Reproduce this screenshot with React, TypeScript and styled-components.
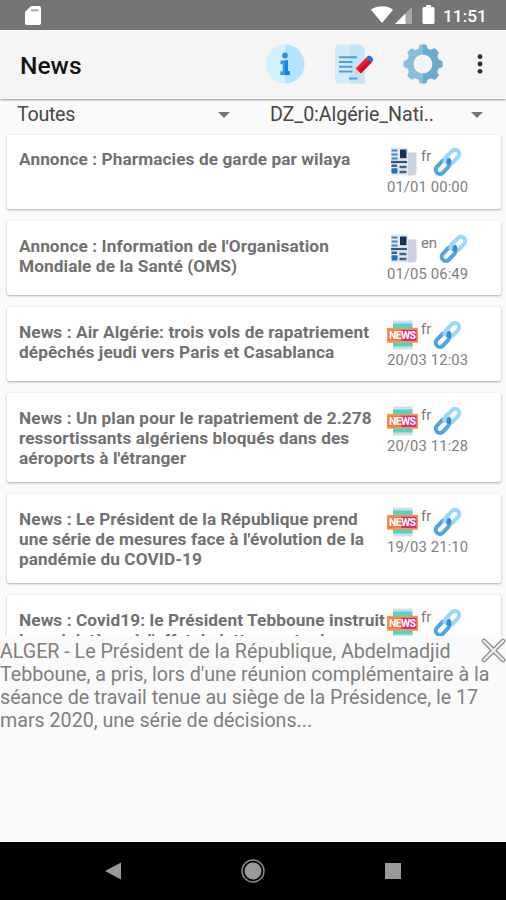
import React from 'react';
import styled, { createGlobalStyle } from 'styled-components';

const GlobalStyle = createGlobalStyle`
  * { box-sizing: border-box; }
  body { margin: 0; background: #fafafa; font-family: Roboto, sans-serif; }
  svg { display: block; flex: none; }
`;

const Screen = styled.div`
  width: 506px;
  height: 900px;
  display: flex;
  flex-direction: column;
  overflow: hidden;
  background: #fafafa;
`;

const StatusBar = styled.header`
  flex: none;
  height: 30px;
  padding: 0 20px 0 25px;
  display: flex;
  align-items: center;
  background: #757575;
  color: #fff;
`;

const StatusIcons = styled.div`
  margin-left: auto;
  display: flex;
  align-items: center;
`;

const Clock = styled.span`
  margin-left: 8px;
  width: 43px;
  font-size: 17.3px;
  font-weight: 500;
  line-height: 30px;
  padding-top: 2px;
  white-space: nowrap;
`;

const Toolbar = styled.nav`
  flex: none;
  position: relative;
  height: 69px;
  padding: 0 17px 0 20px;
  display: flex;
  align-items: center;
  background: #f5f5f5;
  border-top: 1px solid #fdfdfd;
  box-shadow: 0 1px 2px rgba(0, 0, 0, 0.42);
`;

const Title = styled.h1`
  margin: 1px auto 0 0;
  font-size: 24.6px;
  font-weight: 500;
  line-height: 30px;
  letter-spacing: 0;
  color: #141414;
`;

const Actions = styled.div`
  display: flex;
  align-items: center;
  margin-top: -2px;
`;

const Action = styled.button<{ $gap: number }>`
  display: flex;
  padding: 0;
  margin: 0 0 0 ${p => p.$gap}px;
  border: 0;
  background: none;
`;

const Filters = styled.div`
  flex: none;
  height: 33px;
  display: grid;
  grid-template-columns: 253px 253px;
`;

const Filter = styled.div<{ $track: number }>`
  display: flex;
  align-items: center;
  justify-content: space-between;
  height: 32px;
  padding: 0 23px 1px 17px;
  font-size: 19.7px;
  letter-spacing: ${p => p.$track}px;
  color: #484848;
  white-space: nowrap;
`;

const List = styled.main`
  flex: none;
  height: 504px;
  padding: 2.7px 5px 0 7px;
  display: flex;
  flex-direction: column;
  gap: 12px;
  overflow: hidden;
`;

const Card = styled.article<{ $tall: boolean }>`
  flex: none;
  height: ${p => (p.$tall ? 89 : 74.2)}px;
  padding: 14.8px 0 0 12px;
  display: flex;
  background: #fff;
  border-radius: 2.5px;
  box-shadow: 0 1px 2.5px rgba(0, 0, 0, 0.3), 0 0 1px rgba(0, 0, 0, 0.1);
`;

const Headline = styled.h2`
  flex: none;
  width: 368px;
  margin: 0;
  font-size: 17.23px;
  line-height: 20.2px;
  font-weight: 700;
  color: #717171;
`;

const Line = styled.span<{ $track: number }>`
  display: block;
  white-space: nowrap;
  letter-spacing: ${p => p.$track}px;
`;

const Meta = styled.aside`
  display: flex;
  flex-direction: column;
  margin-top: -2px;
`;

const MetaIcons = styled.div`
  height: 32px;
  display: flex;
  align-items: flex-start;
`;

const Lang = styled.span`
  margin: 0 1px 0 3px;
  font-size: 14.8px;
  line-height: 18px;
  color: #7c7c7c;
`;

const Stamp = styled.time`
  font-size: 14.8px;
  line-height: 17px;
  letter-spacing: 0.12px;
  color: #808080;
  white-space: nowrap;
`;

const Detail = styled.section`
  flex: 1;
  position: relative;
  background: #fafafa;
  padding-top: 3.6px;
`;

const DetailText = styled.p`
  margin: 0;
  font-size: 19.7px;
  line-height: 23.1px;
  color: #7f7f7f;
`;

const Close = styled.button`
  position: absolute;
  top: 2px;
  right: 0;
  padding: 0;
  border: 0;
  background: none;
`;

const NavBar = styled.footer`
  flex: none;
  height: 58px;
  padding: 0 104px;
  display: flex;
  align-items: center;
  justify-content: space-between;
  background: #000;
`;

const Caret = () => (
  <svg width="12" height="6" viewBox="0 0 12 6"><path d="M0 0h12L6 6z" fill="#757575" /></svg>
);

const SdCard = () => (
  <svg width="16" height="19" viewBox="0 0 16 19">
    <path d="M6 0h8a2 2 0 0 1 2 2v15a2 2 0 0 1-2 2H2a2 2 0 0 1-2-2V6z" fill="#fff" />
    <path d="M6 4.2h7.500" stroke="#b0b0b0" strokeWidth="2.200" />
  </svg>
);

const Signals = () => (
  <svg width="64" height="20" viewBox="0 0 64 20">
    <path d="M0 4.800C6 .200 16 .200 22 4.800L11 18z" fill="#fff" />
    <path d="M41 2v17H24z" fill="#a6a6a6" />
    <path d="M34.500 8.500V19H24z" fill="#fff" />
    <path d="M55 0h5v2h2a1.500 1.500 0 0 1 1.500 1.500v14A1.500 1.500 0 0 1 62 19h-9a1.500 1.500 0 0 1-1.500-1.500v-14A1.500 1.500 0 0 1 53 2h2z" fill="#fff" />
  </svg>
);

const InfoIcon = () => (
  <svg width="40" height="40" viewBox="0 0 40 40">
    <circle cx="20" cy="20" r="19.500" fill="#d5f0ff" />
    <path d="M20 .5a19.500 19.500 0 0 1 0 39z" fill="#b5e2ff" />
    <circle cx="20" cy="11.500" r="2.900" fill="#2d93ee" />
    <path d="M15.500 16.500H23v10.700h1.800V31h-9.500v-3.800h2.400v-7h-2.200z" fill="#3299f2" />
    <path d="M20 16.500h3v10.700h1.800V31H20z" fill="#1682e4" />
  </svg>
);

const NoteIcon = () => (
  <svg width="40" height="40" viewBox="0 0 40 40">
    <path d="M4 .5h21q5 1 5.500 6v33H3q-2-1-2-3V4q0-3 3-3.500z" fill="#d3ecfa" />
    <path d="M16 .5h9q5 1 5.500 6v33H16z" fill="#c2e5f8" />
    <path d="M5 13.300h18M5 18h13.500M5 22.700h13.500M5 27.500h13.500M15 34.500h8.500" stroke="#4a9fe6" strokeWidth="1.900" />
    <path d="M20.500 30.500l1.200-6 4.800 4.500z" fill="#f8c79a" />
    <path d="M21.700 24.500L32.500 13.200l5.200 5L27 29.200z" fill="#ed1c34" />
    <path d="M24.500 27L35.300 15.900l2.400 2.300L27 29.200z" fill="#d00d29" />
    <path d="M32.500 13.200l1.200-1.200c2-1.500 6.600 2 5.200 5l-1.200 1.200z" fill="#1d6fe0" />
  </svg>
);

const GearIcon = () => (
  <svg width="40" height="40" viewBox="0 0 40 40">
    <defs>
      <clipPath id="gearRight"><path d="M20 0h20v40H20z" /></clipPath>
      <g id="gear">
        <circle cx="20" cy="20" r="12.800" fill="none" strokeWidth="6.600" />
        {[0, 45, 90, 135, 180, 225, 270, 315].map(a => (
          <path key={a} d="M18.300 2.500h3.400l1 3h-5.400z" strokeWidth="4" strokeLinejoin="round" transform={`rotate(${a} 20 20)`} />
        ))}
      </g>
    </defs>
    <use href="#gear" stroke="#88bfde" fill="#88bfde" />
    <use href="#gear" stroke="#6cabd0" fill="#6cabd0" clipPath="url(#gearRight)" />
  </svg>
);

const MoreIcon = () => (
  <svg width="18" height="40" viewBox="0 0 18 40">
    <circle cx="9" cy="12.700" r="2.400" fill="#2c2c2c" />
    <circle cx="9" cy="20" r="2.400" fill="#2c2c2c" />
    <circle cx="9" cy="27.300" r="2.400" fill="#2c2c2c" />
  </svg>
);

const PaperIcon = () => (
  <svg width="31" height="30" viewBox="0 0 31 30">
    <path d="M4 .5h17v28H7q-3 0-3-3z" fill="#e3e8f2" />
    <path d="M21 5.500h8.500v20q0 3-3 3H21z" fill="#cdd0e1" />
    <path d="M4.500 3.500h6M4.500 7.500h6M4.500 11.500h6" stroke="#4489ba" strokeWidth="2.200" />
    <path d="M13 2.500h6.500v8.700H13z" fill="#173257" />
    <path d="M4 15h16" stroke="#28587f" strokeWidth="2.200" />
    <path d="M4.500 18.700H10M12.500 20H19.500M12.500 25h7" stroke="#44627d" strokeWidth="2.500" />
    <rect x="4.500" y="21.300" width="6" height="5.200" rx="1" fill="#1b77bd" />
  </svg>
);

const NewsIcon = () => (
  <svg width="31" height="30" viewBox="0 0 31 30">
    <path d="M6 .5h19.500v29H6z" fill="#d9dde2" />
    <path d="M6 3.500h19.500V8H6zM6 22h19.500v4.500H6z" fill="#45d8d3" />
    <path d="M0 7.800h31v15H0z" fill="#f99a3a" />
    <path d="M1 9.700h14v11.300H1z" fill="#f5794d" />
    <path d="M14.500 9.700h15V21h-15z" fill="#db2b82" />
    <text x="2" y="19" fill="#fff" fontSize="10.500" fontWeight="700" textLength="27" lengthAdjust="spacing">NEWS</text>
  </svg>
);

const LinkIcon = () => (
  <svg width="31" height="31" viewBox="0 0 31 31" fill="none" strokeWidth="4">
    <rect x="-8" y="-4.200" width="16" height="8.400" rx="4.200" transform="translate(20.500 9.800) rotate(-47)" stroke="#98d8fd" />
    <rect x="-8" y="-4.200" width="16" height="8.400" rx="4.200" transform="translate(10.500 20) rotate(-47)" stroke="#51a5df" />
    <path d="M16.500 17.500l1-3.500-1.500-2.500" stroke="#3f88c5" />
    <path d="M12 15.500l1.500-5 3-3.200" stroke="#98d8fd" />
  </svg>
);

const CloseIcon = () => (
  <svg width="25" height="25" viewBox="0 0 25 25" strokeLinecap="round">
    <path d="M3 3l19 19M22 3L3 22" stroke="#8c8c8c" strokeWidth="4.600" />
    <path d="M3 3l19 19M22 3L3 22" stroke="#eee" strokeWidth="2.400" />
  </svg>
);

interface Item { lines: string[]; lang: string; stamp: string; paper?: boolean; tall?: boolean }

const items: Item[] = [
  { lines: ['Annonce : Pharmacies de garde par wilaya'], lang: 'fr', stamp: '01/01 00:00', paper: true },
  { lines: ["Annonce : Information de l'Organisation", 'Mondiale de la Santé (OMS)'], lang: 'en', stamp: '01/05 06:49', paper: true },
  { lines: ['News : Air Algérie: trois vols de rapatriement', 'dépêchés jeudi vers Paris et Casablanca'], lang: 'fr', stamp: '20/03 12:03' },
  { lines: ['News : Un plan pour le rapatriement de 2.278', 'ressortissants algériens bloqués dans des', "aéroports à l'étranger"], lang: 'fr', stamp: '20/03 11:28', tall: true },
  { lines: ['News : Le Président de la République prend', "une série de mesures face à l'évolution de la", 'pandémie du COVID-19'], lang: 'fr', stamp: '19/03 21:10', tall: true },
  { lines: ['News : Covid19: le Président Tebboune instruit', "les ministères à l'effet de lutter contre la"], lang: 'fr', stamp: '19/03 20:04', tall: true },
];

const detail = [
  'ALGER - Le Président de la République, Abdelmadjid',
  "Tebboune, a pris, lors d'une réunion complémentaire à la",
  'séance de travail tenue au siège de la Présidence, le 17',
  'mars 2020, une série de décisions...',
];

export default function App() {
  return (
    <Screen>
      <GlobalStyle />
      <StatusBar>
        <SdCard />
        <StatusIcons><Signals /><Clock>11:51</Clock></StatusIcons>
      </StatusBar>
      <Toolbar>
        <Title>News</Title>
        <Actions>
          <Action $gap={0} aria-label="Info"><InfoIcon /></Action>
          <Action $gap={29} aria-label="Notes"><NoteIcon /></Action>
          <Action $gap={29} aria-label="Settings"><GearIcon /></Action>
          <Action $gap={28} aria-label="More"><MoreIcon /></Action>
        </Actions>
      </Toolbar>
      <Filters>
        <Filter $track={-0.3}>Toutes<Caret /></Filter>
        <Filter $track={-0.08}>DZ_0:Algérie_Nati..<Caret /></Filter>
      </Filters>
      <List>
        {items.map(item => (
          <Card key={item.lines[0]} $tall={!!item.tall}>
            <Headline>{item.lines.map(l => <Line key={l} $track={0.09}>{l}</Line>)}</Headline>
            <Meta>
              <MetaIcons>
                {item.paper ? <PaperIcon /> : <NewsIcon />}
                <Lang>{item.lang}</Lang>
                <LinkIcon />
              </MetaIcons>
              <Stamp>{item.stamp}</Stamp>
            </Meta>
          </Card>
        ))}
      </List>
      <Detail>
        <DetailText>{detail.map(l => <Line key={l} $track={-0.025}>{l}</Line>)}</DetailText>
        <Close aria-label="Close"><CloseIcon /></Close>
      </Detail>
      <NavBar>
        <svg width="18" height="18" viewBox="0 0 18 18"><path d="M1 9L17 .5v17z" fill="#999" /></svg>
        <svg width="24" height="24" viewBox="0 0 24 24"><circle cx="12" cy="12" r="11" fill="none" stroke="#888" strokeWidth="1.500" /><circle cx="12" cy="12" r="8.500" fill="#999" /></svg>
        <svg width="18" height="18" viewBox="0 0 18 18"><path d="M1 1h16v16H1z" fill="#999" /></svg>
      </NavBar>
    </Screen>
  );
}
